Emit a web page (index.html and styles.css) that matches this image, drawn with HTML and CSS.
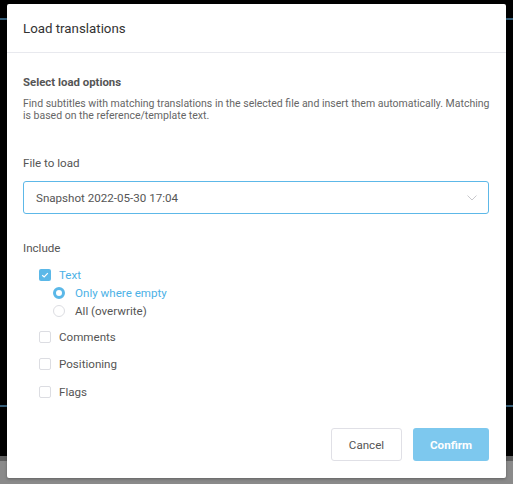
FILE: index.html
```html
<!DOCTYPE html>
<html>
<head>
<meta charset="utf-8">
<link rel="stylesheet" href="styles.css">
</head>
<body>
<div class="backdrop">
  <div class="bg-line bg-line-top"></div>
  <div class="bg-line bg-line-mid"></div>
  <div class="bg-bottom"></div>
</div>
<div class="dialog">
  <div class="dialog-header">Load translations</div>
  <div class="dialog-body">
    <div class="section-title">Select load options</div>
    <p class="description">Find subtitles with matching translations in the selected file and insert them automatically. Matching is based on the reference/template text.</p>
    <div class="field-label">File to load</div>
    <div class="select">
      <span>Snapshot 2022-05-30 17:04</span>
      <svg class="chevron" width="10" height="6" viewBox="0 0 10 6"><path d="M0.5 0.5 L5 5 L9.5 0.5" fill="none" stroke="#c8c8cc" stroke-width="1"/></svg>
    </div>
    <div class="include-label">Include</div>
    <div class="options">
      <div class="option checked">
        <span class="checkbox on"><svg width="12" height="12" viewBox="0 0 12 12"><path d="M3.2 6.2 L5.2 8 L8.8 4.2" fill="none" stroke="#fff" stroke-width="1.2"/></svg></span>
        <span>Text</span>
      </div>
      <div class="sub-options">
        <div class="option checked radio-row">
          <span class="radio on"></span>
          <span>Only where empty</span>
        </div>
        <div class="option radio-row">
          <span class="radio"></span>
          <span>All (overwrite)</span>
        </div>
      </div>
      <div class="option gap-8">
        <span class="checkbox"></span>
        <span>Comments</span>
      </div>
      <div class="option gap-9">
        <span class="checkbox"></span>
        <span>Positioning</span>
      </div>
      <div class="option gap-10">
        <span class="checkbox"></span>
        <span>Flags</span>
      </div>
    </div>
  </div>
  <div class="dialog-footer">
    <button class="btn btn-cancel">Cancel</button>
    <button class="btn btn-confirm">Confirm</button>
  </div>
</div>
</body>
</html>
```
FILE: styles.css
```css
* { box-sizing: border-box; }
html, body { margin: 0; padding: 0; }
body {
  width: 513px;
  height: 484px;
  background: #000;
  font-family: Roboto, "Liberation Sans", sans-serif;
  position: relative;
  overflow: hidden;
}
.backdrop { position: absolute; inset: 0; }
.bg-line { position: absolute; left: 0; right: 0; height: 2px; background: #355d77; }
.bg-line-top { top: 18px; }
.bg-line-mid { top: 405px; }
.bg-bottom {
  position: absolute; left: 0; right: 0; top: 456px; bottom: 0;
  background: #8a8a8a;
  border-top: 5px solid #5e5e5e;
}
.dialog {
  position: absolute;
  left: 7px; top: 4px;
  width: 499px; height: 474px;
  background: #fff;
  border-radius: 2px;
  box-shadow: 0 1px 3px rgba(0,0,0,0.3);
  display: flex;
  flex-direction: column;
}
.dialog-header {
  height: 49px;
  padding: 0 16px;
  display: flex;
  align-items: center;
  font-size: 13.3px;
  color: #333;
  border-bottom: 1px solid #e8e9ee;
}
.dialog-body {
  flex: 1;
  padding: 21px 17px 0 16px;
}
.section-title {
  font-size: 11.4px;
  line-height: 16px;
  font-weight: 700;
  color: #555;
}
.description {
  margin: 8px -8px 0 0;
  font-size: 10.5px;
  line-height: 12px;
  color: #666;
}
.field-label {
  margin-top: 33px;
  font-size: 11.6px;
  line-height: 16px;
  color: #555;
}
.select {
  margin-top: 10px;
  height: 33px;
  border: 1px solid #5db8e8;
  border-radius: 3px;
  display: flex;
  align-items: center;
  justify-content: space-between;
  padding: 0 11px 0 12px;
  font-size: 11.6px;
  color: #555;
}
.chevron { display: block; }
.include-label {
  margin-top: 26px;
  font-size: 11.6px;
  line-height: 16px;
  color: #555;
}
.options {
  margin-top: 10px;
  padding-left: 16px;
}
.option {
  height: 18px;
  display: flex;
  align-items: center;
  gap: 8px;
  font-size: 11.6px;
  color: #555;
}
.option.checked { color: #4cb1e6; }
.sub-options {
  padding-left: 14px;
}
.radio-row { gap: 10px; }
.option.gap-8 { margin-top: 8px; }
.option.gap-9 { margin-top: 9px; }
.option.gap-10 { margin-top: 10px; }
.checkbox {
  width: 12px; height: 12px;
  border: 1px solid #dcdde2;
  border-radius: 2px;
  flex: none;
  display: flex;
}
.checkbox.on {
  border: none;
  background: #5bb8e8;
}
.checkbox svg { display: block; }
.radio {
  width: 12px; height: 12px;
  border: 1px solid #dcdde2;
  border-radius: 50%;
  flex: none;
  background: #fff;
}
.radio.on {
  border: 3.5px solid #5bb8e8;
}
.dialog-footer {
  display: flex;
  justify-content: flex-end;
  gap: 11px;
  padding: 0 17px 17px 16px;
}
.btn {
  height: 33px;
  font-family: Roboto, "Liberation Sans", sans-serif;
  font-size: 11.6px;
  border-radius: 3px;
  padding: 0;
  cursor: pointer;
}
.btn-cancel {
  width: 71px;
  background: #fff;
  border: 1px solid #e0e0e6;
  color: #555;
}
.btn-confirm {
  width: 76px;
  background: #7dc8ee;
  border: none;
  color: #fff;
  font-weight: 700;
}
```
